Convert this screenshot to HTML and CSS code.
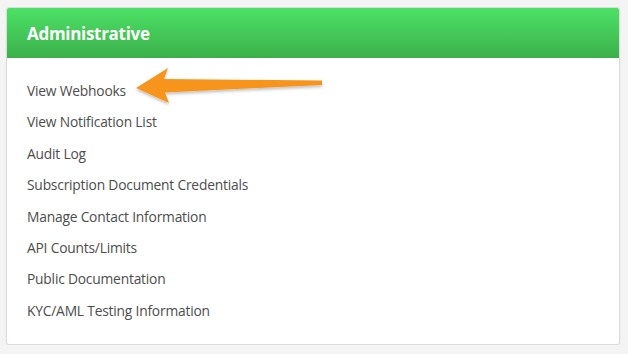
FILE: index.html
```html
<!DOCTYPE html>
<html lang="en">
<head>
    <meta charset="UTF-8">
    <meta name="viewport" content="width=device-width, initial-scale=1.0">
    <title>Administrative</title>
    <link rel="stylesheet" href="styles.css">
</head>
<body>

<div class="panel">
    <div class="panel-header">
        <h2>Administrative</h2>
    </div>
    <ul class="admin-links">
        <li><a href="#">View Webhooks</a></li>
        <li><a href="#">View Notification List</a></li>
        <li><a href="#">Audit Log</a></li>
        <li><a href="#">Subscription Document Credentials</a></li>
        <li><a href="#">Manage Contact Information</a></li>
        <li><a href="#">API Counts/Limits</a></li>
        <li><a href="#">Public Documentation</a></li>
        <li><a href="#">KYC/AML Testing Information</a></li>
    </ul>
</div>

<!-- callout arrow pointing at the first link -->
<svg class="callout-arrow" width="628" height="354" viewBox="0 0 628 354">
    <defs>
        <filter id="arrowShadow" x="-10%" y="-50%" width="120%" height="200%">
            <feDropShadow dx="0" dy="2" stdDeviation="1.5" flood-color="#000" flood-opacity="0.25"/>
        </filter>
    </defs>
    <polygon points="136,88 168,68 164,79 322,80.5 322,85 165,92.5 169,103" fill="#f7941d" filter="url(#arrowShadow)"/>
</svg>

</body>
</html>
```

FILE: styles.css
```css
body {
    font-family: "Open Sans", Arial, sans-serif;
    background-color: #f4f4f4;
    margin: 0;
    padding: 7px 8px 0 6px;
}
.panel {
    background-color: #fff;
    border: 1px solid #dcdcdc;
    border-radius: 3px;
    box-shadow: 0 1px 2px rgba(0, 0, 0, 0.08);
    overflow: hidden;
}
.panel-header {
    height: 50px;
    display: flex;
    align-items: center;
    padding-left: 20px;
    background: linear-gradient(to bottom, #4ce166, #3bb04a);
}
.panel-header h2 {
    margin: 0;
    color: #fff;
    font-size: 17px;
    font-weight: bold;
    letter-spacing: -0.3px;
}
.admin-links {
    list-style: none;
    margin: 0;
    padding: 17px 0 18px 20px;
}
.admin-links li {
    line-height: 31.4px;
    font-size: 13.8px;
}
.admin-links a {
    color: #4d4d4d;
    text-decoration: none;
    letter-spacing: -0.2px;
}
.callout-arrow {
    position: absolute;
    top: 0;
    left: 0;
    pointer-events: none;
}
```
